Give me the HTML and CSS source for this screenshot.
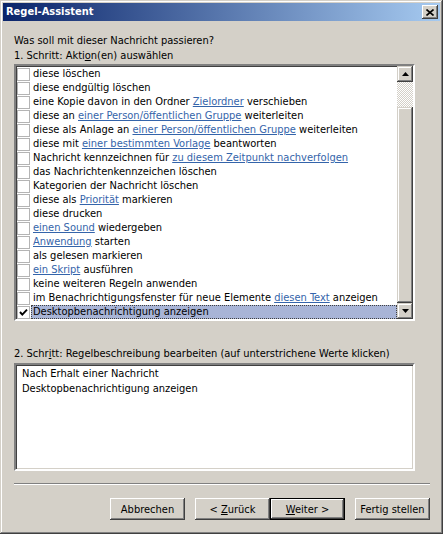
FILE: index.html
```html
<!DOCTYPE html>
<html lang="de">
<head>
<meta charset="utf-8">
<title>Regel-Assistent</title>
<link rel="stylesheet" href="styles.css">
</head>
<body>
<div class="window">
  <div class="titlebar">
    <span class="title">Regel-Assistent</span>
    <span class="close"><svg width="8" height="7" viewBox="0 0 8 7"><path d="M0.5 0.5 L7.5 6.5 M7.5 0.5 L0.5 6.5" stroke="#000" stroke-width="1.6"/></svg></span>
  </div>
  <div class="content">
    <div class="label">Was soll mit dieser Nachricht passieren?</div>
    <div class="label">1. Schritt: Akti<u>o</u>n(en) auswählen</div>
    <div class="listbox">
      <div class="items">
        <div class="row"><span class="cb"></span><span class="txt">diese löschen</span></div>
        <div class="row"><span class="cb"></span><span class="txt">diese endgültig löschen</span></div>
        <div class="row"><span class="cb"></span><span class="txt">eine Kopie davon in den Ordner <a class="lnk">Zielordner</a> verschieben</span></div>
        <div class="row"><span class="cb"></span><span class="txt">diese an <a class="lnk">einer Person/öffentlichen Gruppe</a> weiterleiten</span></div>
        <div class="row"><span class="cb"></span><span class="txt">diese als Anlage an <a class="lnk">einer Person/öffentlichen Gruppe</a> weiterleiten</span></div>
        <div class="row"><span class="cb"></span><span class="txt">diese mit <a class="lnk">einer bestimmten Vorlage</a> beantworten</span></div>
        <div class="row"><span class="cb"></span><span class="txt">Nachricht kennzeichnen für <a class="lnk">zu diesem Zeitpunkt nachverfolgen</a></span></div>
        <div class="row"><span class="cb"></span><span class="txt">das Nachrichtenkennzeichen löschen</span></div>
        <div class="row"><span class="cb"></span><span class="txt">Kategorien der Nachricht löschen</span></div>
        <div class="row"><span class="cb"></span><span class="txt">diese als <a class="lnk">Priorität</a> markieren</span></div>
        <div class="row"><span class="cb"></span><span class="txt">diese drucken</span></div>
        <div class="row"><span class="cb"></span><span class="txt"><a class="lnk">einen Sound</a> wiedergeben</span></div>
        <div class="row"><span class="cb"></span><span class="txt"><a class="lnk">Anwendung</a> starten</span></div>
        <div class="row"><span class="cb"></span><span class="txt">als gelesen markieren</span></div>
        <div class="row"><span class="cb"></span><span class="txt"><a class="lnk">ein Skript</a> ausführen</span></div>
        <div class="row"><span class="cb"></span><span class="txt">keine weiteren Regeln anwenden</span></div>
        <div class="row"><span class="cb"></span><span class="txt">im Benachrichtigungsfenster für neue Elemente <a class="lnk">diesen Text</a> anzeigen</span></div>
        <div class="row"><span class="cb"><svg width="11" height="11" viewBox="0 0 11 11"><path d="M2 5 L4.3 7.6 L9 2.6" fill="none" stroke="#000" stroke-width="1.9"/></svg></span><span class="txt sel">Desktopbenachrichtigung anzeigen</span></div>
      </div>
      <div class="scrollbar">
        <div class="sbtn"><svg width="7" height="4" viewBox="0 0 7 4"><path d="M3.5 0 L7 4 L0 4 Z" fill="#000"/></svg></div>
        <div class="track"></div>
        <div class="thumb"></div>
        <div class="sbtn"><svg width="7" height="4" viewBox="0 0 7 4"><path d="M0 0 L7 0 L3.5 4 Z" fill="#000"/></svg></div>
      </div>
    </div>
    <div class="label step2">2. Schr<u>i</u>tt: Regelbeschreibung bearbeiten (auf unterstrichene Werte klicken)</div>
    <div class="descbox">
      <div class="dline">Nach Erhalt einer Nachricht</div>
      <div class="dline">Desktopbenachrichtigung anzeigen</div>
    </div>
    <div class="separator"></div>
    <div class="buttons">
      <button class="btn">Abbrechen</button>
      <button class="btn back">&lt; <u>Z</u>urück</button>
      <button class="btn default"><u>W</u>eiter &gt;</button>
      <button class="btn finish">Fertig stellen</button>
    </div>
  </div>
</div>
</body>
</html>
```
FILE: styles.css
```css
html, body {
  margin: 0;
  padding: 0;
  background: #d4d0c8;
}
body {
  font-family: "DejaVu Sans Condensed", "DejaVu Sans", sans-serif;
  font-stretch: condensed;
  font-size: 11px;
  color: #000;
}
.window {
  width: 443px;
  height: 534px;
  box-sizing: border-box;
  padding: 3px;
  background: #d4d0c8;
  box-shadow: inset -1px -1px #404040, inset 1px 1px #d4d0c8, inset -2px -2px #808080, inset 2px 2px #ffffff;
  display: flex;
  flex-direction: column;
}
.titlebar {
  height: 18px;
  background: linear-gradient(to right, #0a246a, #a6caf0);
  display: flex;
  align-items: center;
  justify-content: space-between;
}
.title {
  color: #fff;
  font-weight: bold;
  font-size: 11px;
  line-height: 18px;
  padding-left: 3px;
}
.close {
  width: 16px;
  height: 14px;
  box-sizing: border-box;
  margin-right: 2px;
  background: #d4d0c8;
  box-shadow: inset -1px -1px #404040, inset 1px 1px #ffffff, inset -2px -2px #808080, inset 2px 2px #d4d0c8;
  display: flex;
  align-items: center;
  justify-content: center;
}
.close svg { display: block; }
.content {
  padding: 12px 10px 0 11px;
  display: flex;
  flex-direction: column;
}
.label {
  line-height: 15px;
  height: 15px;
  white-space: nowrap;
}
.listbox {
  margin-top: 1px;
  width: 401px;
  height: 257px;
  box-sizing: border-box;
  border-style: solid;
  border-width: 2px;
  border-color: #808080 #ffffff #ffffff #808080;
  box-shadow: inset 1px 1px #404040, inset -1px -1px #d4d0c8;
  background: #fff;
  display: flex;
}
.items {
  flex: 1;
  padding-top: 1px;
  overflow: hidden;
}
.row {
  display: flex;
  align-items: center;
  height: 14px;
}
.cb {
  width: 13px;
  height: 13px;
  margin-left: 1px;
  box-sizing: border-box;
  border: 1px solid #b4b4b4;
  background: #fff;
  display: flex;
  align-items: center;
  justify-content: center;
  flex: none;
}
.cb svg { display: block; }
.txt {
  flex: 1;
  margin-left: 1px;
  padding-left: 2px;
  line-height: 14px;
  height: 14px;
  white-space: nowrap;
  box-sizing: border-box;
}
.txt.sel {
  background: #a8b4d6;
  outline: 1px dotted #404040;
  outline-offset: -1px;
}
.lnk {
  color: #3464aa;
  text-decoration: underline;
}
.scrollbar {
  width: 16px;
  flex: none;
  display: flex;
  flex-direction: column;
}
.sbtn {
  height: 16px;
  flex: none;
  background: #d4d0c8;
  box-shadow: inset -1px -1px #404040, inset 1px 1px #d4d0c8, inset -2px -2px #808080, inset 2px 2px #ffffff;
  display: flex;
  align-items: center;
  justify-content: center;
}
.sbtn svg { display: block; }
.track {
  height: 25px;
  flex: none;
  background: repeating-conic-gradient(#ffffff 0 25%, #d4d0c8 0 50%) 0 0 / 2px 2px;
}
.thumb {
  flex: 1;
  background: #d4d0c8;
  box-shadow: inset -1px -1px #404040, inset 1px 1px #d4d0c8, inset -2px -2px #808080, inset 2px 2px #ffffff;
}
.step2 {
  margin-top: 25px;
}
.descbox {
  margin-top: 2px;
  width: 401px;
  height: 108px;
  box-sizing: border-box;
  border-style: solid;
  border-width: 2px;
  border-color: #808080 #ffffff #ffffff #808080;
  box-shadow: inset 1px 1px #404040, inset -1px -1px #d4d0c8;
  background: #fff;
  padding: 1px 0 0 6px;
}
.dline {
  line-height: 15px;
  white-space: nowrap;
}
.separator {
  margin-top: 12px;
  height: 2px;
  width: 416px;
  box-sizing: border-box;
  border-top: 1px solid #808080;
  border-bottom: 1px solid #ffffff;
}
.buttons {
  margin-top: 13px;
  width: 416px;
  display: flex;
  justify-content: flex-end;
}
.btn {
  width: 75px;
  height: 22px;
  padding: 0;
  margin: 0;
  border: none;
  font-family: inherit;
  font-stretch: condensed;
  font-size: 11px;
  color: #000;
  background: #d4d0c8;
  box-shadow: inset -1px -1px #404040, inset 1px 1px #ffffff, inset -2px -2px #808080, inset 2px 2px #d4d0c8;
}
.back {
  margin-left: 10px;
}
.default {
  box-shadow: inset 0 0 0 1px #000, inset -2px -2px #404040, inset 2px 2px #ffffff, inset -3px -3px #808080;
}
.finish {
  margin-left: 10px;
}
```
